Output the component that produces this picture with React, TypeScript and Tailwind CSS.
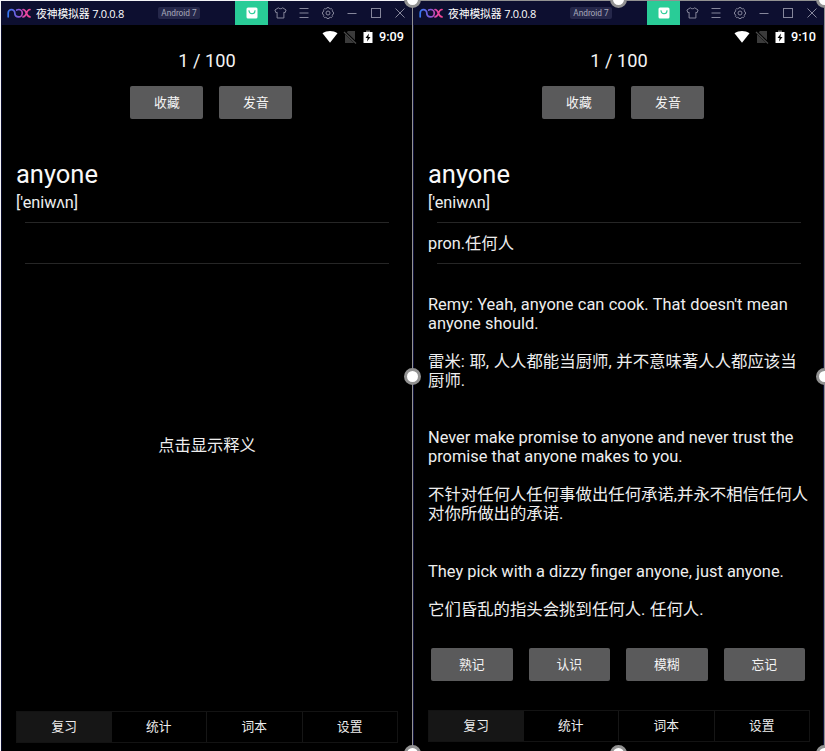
import React from "react";

const roboto = "font-[Roboto,'Noto_Sans_CJK_SC',sans-serif]";

function NoxLogo({ id }: { id: string }) {
  return (
    <svg width="24" height="12" viewBox="0 0 24 12" fill="none" stroke={`url(#${id})`} strokeWidth="1.7" strokeLinecap="round">
      <defs>
        <linearGradient id={id} gradientUnits="userSpaceOnUse" x1="0" y1="0" x2="24" y2="0">
          <stop offset="0" stopColor="#2f7af5" />
          <stop offset="0.5" stopColor="#8658d8" />
          <stop offset="0.7" stopColor="#e045a6" />
          <stop offset="1" stopColor="#f6458f" />
        </linearGradient>
      </defs>
      <path d="M1.200 9.800V6a3.300 3.300 0 0 1 6.600 0c0 2.300 1.500 3.900 3.800 3.900a3.700 3.700 0 0 0 0-7.400c-.8 0-1.300.2-1.900.5" />
      <path d="M16 2.500c4 0 2.800 7.400 7 7.400M23 2.500c-4.200 0-3 7.400-7 7.400" />
    </svg>
  );
}

function TitleBar({ id }: { id: string }) {
  return (
    <header className="flex h-6 w-[411px] shrink-0 items-center bg-[#0d0f30] pl-[6px] text-[#85869b]">
      <NoxLogo id={id} />
      <span className="ml-[5px] w-[122px] whitespace-nowrap font-['Open_Sans','Noto_Sans_CJK_SC',sans-serif] text-[10.800px] leading-[25px] tracking-[-0.1px] text-white">
        夜神模拟器 <span className="text-[11px] tracking-[-0.3px]">7.0.0.8</span>
      </span>
      <span className="flex h-3 w-[42px] items-center justify-center whitespace-nowrap rounded-[2px] bg-[#25274a] font-[Roboto,sans-serif] text-[8.300px] text-[#a8a9ba]">
        Android 7
      </span>
      <div className="ml-[35px] flex h-6 w-[33px] items-center justify-center bg-[#29cc97]">
        <svg width="12" height="12" viewBox="0 0 12 12">
          <rect x="0.500" y="0.500" width="11" height="11" rx="1.500" fill="#fff" />
          <path d="M3 3.200v.6a3 3 0 0 0 6 0v-.6" fill="none" stroke="#29cc97" strokeWidth="1.100" />
        </svg>
      </div>
      <svg className="ml-[6px]" width="13" height="12" viewBox="0 0 13 12" fill="none" stroke="currentColor">
        <path d="M4.300.8.900 3l1 2.700 1.200-.5V11h6.800V5.200l1.200.5 1-2.700L8.700.8C8.100 2 4.900 2 4.300.8Z" strokeLinejoin="round" />
      </svg>
      <svg className="ml-[11px]" width="12" height="12" viewBox="0 0 12 12" stroke="currentColor">
        <path d="M1.500 1.500h9M1.500 6h9M1.500 10.500h9" />
      </svg>
      <svg className="ml-3" width="12" height="12" viewBox="0 0 12 12" fill="none" stroke="currentColor">
        <path d="M4.700 1.500 5 .6h2l.3.900 1 .400.900-.400 1.400 1.400-.400.900.400 1 .900.300v2l-.900.300-.400 1 .400.900-1.400 1.400-.900-.400-1 .400-.300.800H5l-.300-.800-1-.400-.900.400-1.400-1.400.400-.900-.400-1-.900-.300v-2l.900-.300.400-1-.400-.900 1.400-1.400.900.400Z" strokeLinejoin="round" />
        <circle cx="6" cy="6" r="2" />
      </svg>
      <svg className="ml-3" width="12" height="12" viewBox="0 0 12 12" stroke="currentColor">
        <path d="M1.500 6.500h9" />
      </svg>
      <svg className="ml-3" width="12" height="12" viewBox="0 0 12 12" fill="none" stroke="currentColor">
        <rect x="1.500" y="1.500" width="9" height="9" />
      </svg>
      <svg className="ml-3" width="12" height="12" viewBox="0 0 12 12" stroke="currentColor">
        <path d="m1.500 1.500 9 9M10.500 1.500l-9 9" />
      </svg>
    </header>
  );
}

function StatusBar({ time }: { time: string }) {
  return (
    <div className="flex h-6 w-[411px] shrink-0 items-center justify-end pr-2 text-white">
      <svg width="16" height="14" viewBox="0 0 16 14">
        <path d="M.500 3.300C5 .200 11 .200 15.500 3.300L8 12.700Z" fill="#fff" />
      </svg>
      <svg className="ml-[5px]" width="14" height="14" viewBox="0 0 14 14">
        <path d="M5 1h7v12H2V4Z" fill="#3b3b3b" />
        <path d="m1 1.500 12 11.500" stroke="#000" strokeWidth="2.500" />
        <path d="m1 2 12 11.500" stroke="#4a4a4a" strokeWidth="1.200" />
      </svg>
      <svg className="ml-[6px]" width="10" height="14" viewBox="0 0 10 14">
        <path d="M3 .500h4V2H3Z" fill="#777" />
        <path d="M.500 2h9v11h-9Z" fill="#fff" />
        <path d="M6 3.500 2.500 8H4.600L4 11.500 7.500 7H5.400Z" fill="#000" />
      </svg>
      <span className="ml-[6px] w-[25px] whitespace-nowrap font-[Roboto,sans-serif] text-[12.700px] font-medium leading-6">{time}</span>
    </div>
  );
}

function ActionButton({ label, wide = false }: { label: string; wide?: boolean }) {
  return (
    <button className={`flex h-[33px] items-center justify-center rounded-[2px] bg-[#5a5a5b] pt-px text-[12.800px] leading-none text-[#f4f4f4] ${wide ? "w-[81.500px]" : "w-[73px]"}`}>
      {label}
    </button>
  );
}

function Tabs() {
  return (
    <nav className="flex h-8 w-[382px] shrink-0 border border-[#131313]">
      {["复习", "统计", "词本", "设置"].map((label, i) => (
        <div
          key={label}
          className={`flex flex-1 items-center justify-center pt-px text-[12.700px] leading-none text-[#eee] ${i === 0 ? "bg-[#161616]" : i > 1 ? "border-l border-[#161616]" : ""}`}
        >
          {label}
        </div>
      ))}
    </nav>
  );
}

function WordHeader({ time, meaning }: { time: string; meaning: string }) {
  return (
    <>
      <StatusBar time={time} />
      <div className="h-[22px] w-full pl-px text-center text-[18.200px] leading-[23px] text-[#f4f4f4]">1 / 100</div>
      <div className="mt-[15px] flex gap-4 pl-[129.400px]">
        <ActionButton label="收藏" />
        <ActionButton label="发音" />
      </div>
      <div className="mt-[39px] h-8 pl-[15px] text-[25.500px] leading-8 text-[#f8f8f8]">anyone</div>
      <div className="mt-px h-6 pl-[15px] text-[16.300px] leading-6 text-[#eee]">['eniwʌn]</div>
      <div className="ml-6 mt-[7px] flex h-[42px] w-[364px] shrink-0 items-center border-y border-[#262626]">
        <span className="-ml-[9px] whitespace-nowrap pt-px text-[16.300px] leading-6 text-[#eee]">{meaning}</span>
      </div>
    </>
  );
}

const examples = [
  {
    en: ["Remy: Yeah, anyone can cook. That doesn't mean", "anyone should."],
    zh: ["雷米: 耶, 人人都能当厨师, 并不意味著人人都应该当", "厨师."],
  },
  {
    en: ["Never make promise to anyone and never trust the", "promise that anyone makes to you."],
    zh: ["不针对任何人任何事做出任何承诺,并永不相信任何人", "对你所做出的承诺."],
  },
  {
    en: ["They pick with a dizzy finger anyone, just anyone."],
    zh: ["它们昏乱的指头会挑到任何人. 任何人."],
  },
];

function Lines({ lines }: { lines: string[] }) {
  return (
    <>
      {lines.map((line) => (
        <p key={line} className="h-[19.080px] whitespace-nowrap">{line}</p>
      ))}
    </>
  );
}

function Handle({ className }: { className: string }) {
  return <span className={`absolute size-[17px] rounded-full border-[3px] border-[#929292] bg-white ${className}`} />;
}

export default function App() {
  return (
    <div className={`relative flex h-[751px] w-[825px] overflow-hidden bg-black ${roboto}`}>
      <section className="flex h-full w-[412px] shrink-0 flex-col border-l border-t border-[#f3f3f6]">
        <TitleBar id="nox-left" />
        <div className="flex w-[411px] grow flex-col border-l border-[#090b2b]">
          <div className="-ml-px flex grow flex-col">
            <WordHeader time="9:09" meaning="" />
            <div className="mt-[171px] w-full pl-px text-center text-[16.300px] leading-[22px] text-[#eee]">点击显示释义</div>
            <div className="mb-2 ml-[15px] mt-auto">
              <Tabs />
            </div>
          </div>
        </div>
      </section>
      <section className="flex h-full w-[413px] shrink-0 flex-col border-x border-t border-[#929292]">
        <TitleBar id="nox-right" />
        <div className="flex w-[411px] grow flex-col border-x border-[#10123a]">
          <div className="-mx-px flex grow flex-col">
            <WordHeader time="9:10" meaning="pron.任何人" />
            <div className="ml-[15px] mt-[30.500px] text-[16.400px] leading-[19.080px] text-[#eee]">
              {examples.map((ex, i) => (
                <article key={i} className="mb-[38.160px] first:[word-spacing:0.3px] last:mb-0">
                  <Lines lines={ex.en} />
                  <div className="h-[19.080px]" />
                  <div className="[word-spacing:0.6px]">
                    <Lines lines={ex.zh} />
                  </div>
                </article>
              ))}
            </div>
            <div className="mb-[29px] ml-[18px] mt-auto flex gap-4">
              <ActionButton label="熟记" wide />
              <ActionButton label="认识" wide />
              <ActionButton label="模糊" wide />
              <ActionButton label="忘记" wide />
            </div>
            <div className="mb-[9px] ml-[15px]">
              <Tabs />
            </div>
          </div>
        </div>
      </section>
      <Handle className="-top-[9px] left-[404px]" />
      <Handle className="-top-[9px] left-[610px]" />
      <Handle className="-top-[9px] left-[816px]" />
      <Handle className="left-[404px] top-[368px]" />
      <Handle className="left-[816px] top-[368px]" />
      <Handle className="left-[404px] top-[745px]" />
      <Handle className="left-[610px] top-[745px]" />
      <Handle className="left-[816px] top-[745px]" />
    </div>
  );
}
